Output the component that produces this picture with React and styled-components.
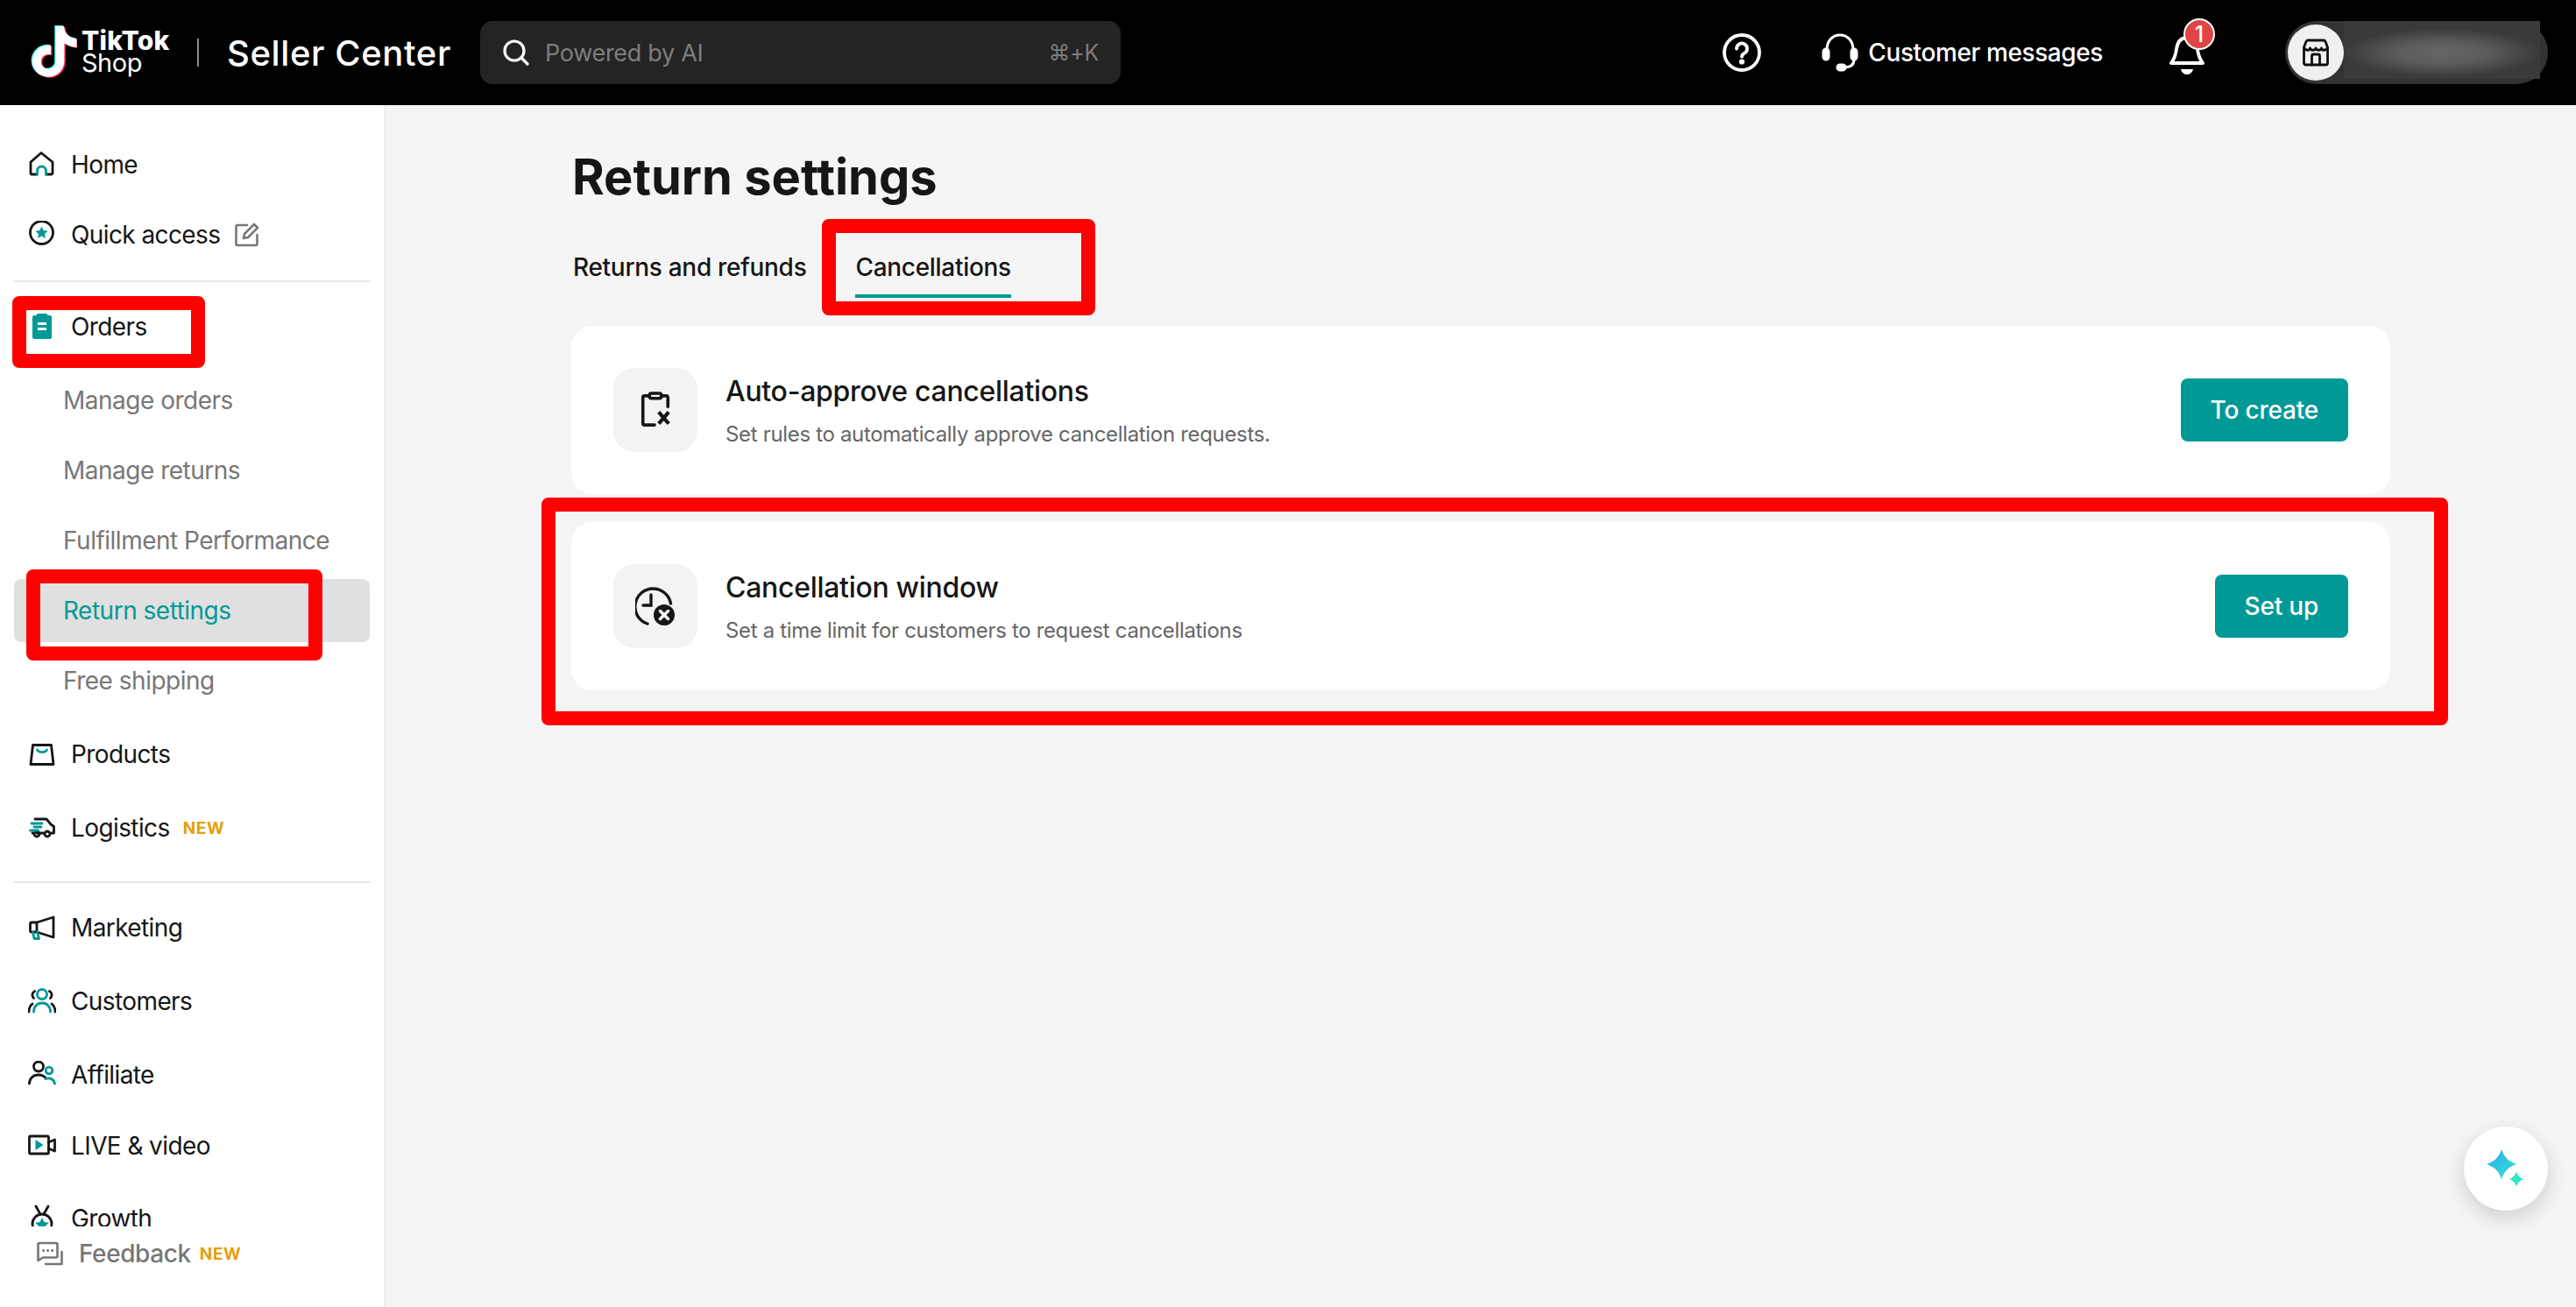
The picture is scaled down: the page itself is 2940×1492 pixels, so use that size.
import React from "react";
import styled, { createGlobalStyle } from "styled-components";

const TEAL = "#009995";
const INK = "#161616";

const GlobalStyle = createGlobalStyle`
  html, body {
    margin: 0;
    padding: 0;
    background: #f5f5f5;
    font-family: Inter, "Noto Sans", sans-serif;
    color: ${INK};
  }
  * { box-sizing: border-box; }
`;

const Page = styled.div`
  position: relative;
  width: 2940px;
  height: 1492px;
  overflow: hidden;
  display: flex;
  flex-direction: column;
`;

const Header = styled.header`
  height: 120px;
  flex: none;
  background: #000;
  display: flex;
  align-items: center;
  color: #fff;
  padding: 0 32px 0 32px;
`;

const LogoMark = styled.svg`
  width: 56px;
  height: 64px;
  flex: none;
`;

const LogoWords = styled.div`
  width: 137px;
  padding-left: 5px;
  display: flex;
  flex-direction: column;
  line-height: 26px;
  padding-bottom: 2px;
  b {
    font-size: 30px;
    font-weight: 800;
    letter-spacing: 0.2px;
  }
  span {
    font-size: 29px;
    letter-spacing: -0.5px;
  }
`;

const LogoDivider = styled.div`
  width: 2px;
  height: 32px;
  background: #8a8a8a;
  margin-right: 32px;
`;

const AppName = styled.div`
  font-size: 40px;
  font-weight: 500;
  width: 289px;
  letter-spacing: 0.6px;
`;

const Search = styled.div`
  width: 731px;
  height: 72px;
  border-radius: 14px;
  background: #242424;
  display: flex;
  align-items: center;
  padding: 0 25px;
  gap: 17px;
  font-size: 27px;
  letter-spacing: -0.3px;
  color: #7d7d7d;
  span:last-child {
    margin-left: auto;
    font-size: 25px;
  }
`;

const HeaderRight = styled.div`
  margin-left: auto;
  display: flex;
  align-items: center;
`;

const HeaderIcon = styled.svg`
  flex: none;
`;

const Messages = styled.div`
  display: flex;
  align-items: center;
  gap: 10px;
  font-size: 28px;
  font-weight: 500;
  letter-spacing: -0.4px;
  margin-left: 68px;
`;

const BellWrap = styled.div`
  position: relative;
  width: 44px;
  height: 44px;
  margin: 6px 0 0 76px;
`;

const BellBadge = styled.div`
  position: absolute;
  top: -20px;
  left: 16px;
  width: 36px;
  height: 36px;
  border-radius: 50%;
  background: #e04444;
  border: 2px solid #fff;
  font-size: 25px;
  font-weight: 500;
  display: flex;
  align-items: center;
  justify-content: center;
`;

const Account = styled.div`
  width: 300px;
  height: 72px;
  margin-left: 88px;
  border-radius: 36px;
  background: #333;
  display: flex;
  align-items: center;
  padding-left: 3px;
`;

const Avatar = styled.div`
  width: 64px;
  height: 64px;
  border-radius: 50%;
  flex: none;
  background: #f0f0f0;
  display: flex;
  align-items: center;
  justify-content: center;
`;

const BlurredName = styled.div`
  width: 224px;
  height: 66px;
  align-self: flex-start;
  background: radial-gradient(ellipse 50% 42% at 50% 55%, #666 0%, #5c5c5c 45%, #3a3a3a 100%);
`;

const Body = styled.div`
  flex: 1;
  display: flex;
  min-height: 0;
`;

const Sidebar = styled.aside`
  width: 440px;
  flex: none;
  background: #fff;
  border-right: 2px solid #eee;
  display: flex;
  flex-direction: column;
`;

const NavScroll = styled.nav`
  height: 1280px;
  flex: none;
  overflow: hidden;
  padding: 32px 16px 0;
`;

const NavItem = styled.div`
  height: 72px;
  margin-top: ${(p) => p.$top || 0}px;
  padding-left: 16px;
  display: flex;
  align-items: center;
  gap: 17px;
  font-size: 28px;
  letter-spacing: -0.6px;
`;

const SubItem = styled.div`
  height: 72px;
  margin-top: ${(p) => p.$top ?? 8}px;
  padding-left: 56px;
  display: flex;
  align-items: center;
  border-radius: 8px;
  font-size: 28px;
  letter-spacing: -0.5px;
  color: ${(p) => (p.$active ? TEAL : "#777")};
  background: ${(p) => (p.$active ? "#e0e0e0" : "transparent")};
`;

const NavIcon = styled.svg`
  width: 32px;
  height: 32px;
  flex: none;
`;

const NavDivider = styled.div`
  height: 2px;
  background: #e6e6e6;
  margin-top: ${(p) => p.$top}px;
`;

const NewTag = styled.span`
  color: #e2a00e;
  font-size: 19px;
  font-weight: 700;
  letter-spacing: 0.6px;
  margin-left: ${(p) => p.$left}px;
`;

const SideFooter = styled.div`
  padding: 14px 0 0 42px;
  display: flex;
  align-items: center;
  gap: 18px;
  font-size: 28px;
  font-weight: 500;
  letter-spacing: -0.4px;
  color: #777;
`;

const Main = styled.main`
  flex: 1;
  padding: 0 212px;
`;

const Title = styled.h1`
  margin: 46px 0 0;
  font-size: 56px;
  line-height: 72px;
  font-weight: 700;
  padding-left: 1px;
`;

const Tabs = styled.div`
  display: flex;
  margin-top: 48px;
  padding-left: 2px;
  gap: 56px;
  margin-bottom: 32px;
`;

const Tab = styled.div`
  font-size: 28px;
  font-weight: 500;
  line-height: 38px;
  height: 54px;
  letter-spacing: -0.3px;
  border-bottom: 4px solid ${(p) => (p.$active ? TEAL : "transparent")};
`;

const Card = styled.section`
  height: 192px;
  background: #fff;
  border-radius: 24px;
  padding: 0 48px;
  margin-bottom: 32px;
  display: flex;
  align-items: center;
  gap: 32px;
`;

const CardIcon = styled.div`
  width: 96px;
  height: 96px;
  flex: none;
  border-radius: 24px;
  background: #f3f3f3;
  display: flex;
  align-items: center;
  justify-content: center;
`;

const CardText = styled.div`
  flex: 1;
  min-width: 0;
`;

const CardTitle = styled.div`
  font-size: 32px;
  font-weight: 500;
  line-height: 44px;
  letter-spacing: -0.3px;
`;

const CardDesc = styled.div`
  font-size: 24px;
  line-height: 32px;
  margin-top: 11px;
  letter-spacing: -0.33px;
  color: #666;
`;

const Button = styled.button`
  height: 72px;
  padding: 0 34px;
  flex: none;
  border: 0;
  border-radius: 8px;
  background: ${TEAL};
  color: #fff;
  font-family: inherit;
  font-size: 28px;
  font-weight: 500;
  letter-spacing: -0.2px;
`;

const Mark = styled.div`
  position: absolute;
  left: ${(p) => p.$x}px;
  top: ${(p) => p.$y}px;
  width: ${(p) => p.$w}px;
  height: ${(p) => p.$h}px;
  border: 16px solid #f00;
  border-radius: 8px;
  pointer-events: none;
`;

const AiButton = styled.div`
  position: absolute;
  right: 32px;
  bottom: 110px;
  width: 96px;
  height: 96px;
  border-radius: 50%;
  background: #fff;
  box-shadow: 0 8px 24px rgba(0, 0, 0, 0.16);
  display: flex;
  align-items: center;
  justify-content: center;
`;

const TIKTOK_PATH =
  "M12.525.02c1.31-.02 2.61-.01 3.91-.02.08 1.53.63 3.09 1.75 4.17 1.12 1.11 2.7 1.62 4.24 1.79v4.03c-1.44-.05-2.89-.35-4.2-.97-.57-.26-1.1-.59-1.62-.93-.01 2.92.01 5.84-.02 8.75-.08 1.4-.54 2.79-1.35 3.94-1.31 1.92-3.58 3.17-5.91 3.21-1.43.08-2.86-.31-4.08-1.03-2.02-1.19-3.44-3.37-3.65-5.71-.02-.5-.03-1-.01-1.49.18-1.9 1.12-3.72 2.58-4.96 1.66-1.44 3.98-2.13 6.15-1.72.02 1.48-.04 2.96-.04 4.44-.99-.32-2.15-.23-3.02.37-.63.41-1.11 1.04-1.36 1.75-.21.51-.15 1.07-.14 1.61.24 1.64 1.82 3.02 3.5 2.87 1.12-.01 2.19-.66 2.77-1.61.19-.33.4-.67.41-1.06.1-1.79.06-3.57.07-5.36.01-4.03-.01-8.05.02-12.07z";

const TikTokLogo = () => (
  <LogoMark viewBox="0.6 -.2 23 26.400" preserveAspectRatio="none">
    <path d={TIKTOK_PATH} fill="#25f4ee" transform="translate(.5 .2)" />
    <path d={TIKTOK_PATH} fill="#fe2c55" transform="translate(1.6 .9)" />
    <path d={TIKTOK_PATH} fill="#fff" transform="translate(1 .5)" />
  </LogoMark>
);

const line = { fill: "none", stroke: INK, strokeWidth: 2.8, strokeLinecap: "round", strokeLinejoin: "round" };
const teal = { ...line, stroke: TEAL };

const HomeIcon = () => (
  <NavIcon viewBox="0 0 32 32">
    <path d="M10 27H4.500a1.500 1.500 0 0 1-1.500-1.500V13L15 2.500 28 13v12.500a1.500 1.500 0 0 1-1.500 1.500H22" {...line} />
    <path d="M10.500 27.500V23a5 5 0 0 1 10 0v4.500" {...teal} />
  </NavIcon>
);

const QuickIcon = () => (
  <NavIcon viewBox="0 0 32 32">
    <circle cx="15.500" cy="13.500" r="13" {...line} />
    <path d="M15.500 6.500l2.200 4.600 5 .6-3.700 3.400 1 5-4.500-2.500-4.500 2.500 1-5-3.700-3.400 5-.6z" fill={TEAL} />
  </NavIcon>
);

const EditIcon = () => (
  <svg width="28" height="28" viewBox="0 0 28 28" fill="none" stroke="#777" strokeWidth="2.600" strokeLinecap="round" strokeLinejoin="round">
    <path d="M14 3H3a1.500 1.500 0 0 0-1.500 1.500v20A1.500 1.500 0 0 0 3 26h21a1.500 1.500 0 0 0 1.500-1.500V14" />
    <path d="M22 2l4 4-11 11-5 1 1-5z" />
  </svg>
);

const OrdersIcon = () => (
  <NavIcon viewBox="0 0 32 32">
    <path d="M11 1h10a1 1 0 0 1 1 1v1h3a2 2 0 0 1 2 2v23a2 2 0 0 1-2 2H7a2 2 0 0 1-2-2V5a2 2 0 0 1 2-2h3V2a1 1 0 0 1 1-1z" fill={TEAL} />
    <path d="M11 12.500h10M11 18.500h10" stroke="#fff" strokeWidth="3" />
  </NavIcon>
);

const ProductsIcon = () => (
  <NavIcon viewBox="0 0 32 32">
    <path d="M5.500 5.500h21l2.500 22H3z" {...line} />
    <path d="M10.500 11c1.500 3.500 9.500 3.500 11 0" {...teal} />
  </NavIcon>
);

const TruckIcon = () => (
  <NavIcon viewBox="0 0 32 32">
    <path d="M8 6h13l5 6 3.500 2.500V22h-3M10 22h8M5 22h1.500" {...line} />
    <circle cx="10" cy="23" r="3" {...line} />
    <circle cx="22" cy="23" r="3" {...line} />
    <path d="M4 11h12M7 15h8M2.500 19h9" {...teal} />
  </NavIcon>
);

const MegaphoneIcon = () => (
  <NavIcon viewBox="0 0 32 32">
    <path d="M10 10v11H4a1.500 1.500 0 0 1-1.500-1.500v-8A1.500 1.500 0 0 1 4 10zM10 10l19-6v23l-19-6" {...line} />
    <path d="M5.500 21l1.500 7.500h5.500L10.500 21" {...teal} />
  </NavIcon>
);

const CustomersIcon = () => (
  <NavIcon viewBox="0 0 32 32">
    <circle cx="16" cy="8" r="5.500" {...teal} />
    <path d="M6.500 28c0-6 4-10 9.500-10s9.500 4 9.500 10" {...teal} />
    <path d="M7.500 4.500C4.500 6 4 10 6.500 12.500M24.500 4.500c3 1.500 3.500 5.500 1 8M1 28c0-4 1-7 4-9M31 28c0-4-1-7-4-9" {...line} />
  </NavIcon>
);

const AffiliateIcon = () => (
  <NavIcon viewBox="0 0 32 32">
    <circle cx="12" cy="6.500" r="5.500" {...line} />
    <path d="M1.500 26c0-6 4.500-10 10.500-10 3.500 0 6.500 1.500 8.500 4" {...line} />
    <circle cx="24" cy="11" r="3.800" {...teal} />
    <path d="M20 20.500c4.500-1.500 9.500 0 10.500 5.500" {...teal} />
  </NavIcon>
);

const LiveIcon = () => (
  <NavIcon viewBox="0 0 32 32">
    <rect x="1.500" y="5" width="22" height="20" rx="1.500" {...line} />
    <path d="M23.500 12l7-3v13l-7-3" {...line} />
    <path d="M8.500 9l9 6-9 6z" fill={TEAL} />
  </NavIcon>
);

const GrowthIcon = () => (
  <NavIcon viewBox="0 0 32 32">
    <circle cx="16" cy="22" r="11" {...line} />
    <path d="M9 2l5 9M23 2l-5 9" {...line} />
    <path d="M16 15l2.500 5 5.500.8-4 3.700 1 5.500-5-2.700-5 2.700 1-5.500-4-3.700 5.500-.8z" fill={TEAL} />
  </NavIcon>
);

const FeedbackIcon = () => (
  <svg width="30" height="28" viewBox="0 0 30 28" fill="none" stroke="#777" strokeWidth="2.600" strokeLinecap="round" strokeLinejoin="round">
    <path d="M3 2h19a1.500 1.500 0 0 1 1.500 1.500V17a1.500 1.500 0 0 1-1.500 1.500H7L1.500 22V3.500A1.500 1.500 0 0 1 3 2z" />
    <path d="M28.500 12v14H10" />
    <path d="M7.500 10.500h.1M12.500 10.500h.1M17.500 10.500h.1" strokeWidth="3" />
  </svg>
);

const ClipboardX = () => (
  <svg width="38" height="42" viewBox="0 0 40 44" fill="none" stroke={INK} strokeWidth="3.800" strokeLinejoin="round">
    <path d="M13 5H7a2 2 0 0 0-2 2v31a2 2 0 0 0 2 2h12M27 5h6a2 2 0 0 1 2 2v11" strokeLinecap="round" />
    <rect x="13" y="2" width="14" height="6" rx="2" />
    <path d="M24 24.500l12 14M36 24.500l-12 14" strokeWidth="4.400" />
  </svg>
);

const ClockX = () => (
  <svg width="46" height="46" viewBox="0 0 46 46" fill="none">
    <path d="M14 43A20.500 20.500 0 1 1 40.500 20" stroke={INK} strokeWidth="3.400" strokeLinecap="round" />
    <path d="M18 10v12H9" stroke={INK} strokeWidth="3.400" strokeLinecap="round" />
    <circle cx="33" cy="33" r="12" fill={INK} />
    <path d="M28.500 28.500l9 9M37.500 28.500l-9 9" stroke="#fff" strokeWidth="3.400" strokeLinecap="round" />
  </svg>
);

const StoreIcon = () => (
  <svg width="30" height="32" viewBox="0 0 30 32" fill="none" stroke="#111" strokeWidth="2.800" strokeLinejoin="round" strokeLinecap="round">
    <path d="M6 2h18a2 2 0 0 1 2 1.500L28.500 10v18a2 2 0 0 1-2 2h-23a2 2 0 0 1-2-2V10L4 3.500A2 2 0 0 1 6 2z" />
    <path d="M2 11c2 3 6 3 6.500 0 1 3 6 3 6.500 0 1 3 6 3 6.500 0 .5 3 4.500 3 6.500 0" />
    <path d="M10.500 30V20a2 2 0 0 1 2-2h5a2 2 0 0 1 2 2v10" />
  </svg>
);

const App = () => (
  <Page>
    <GlobalStyle />
    <Header>
      <TikTokLogo />
      <LogoWords>
        <b>TikTok</b>
        <span>Shop</span>
      </LogoWords>
      <LogoDivider />
      <AppName>Seller Center</AppName>
      <Search>
        <svg width="32" height="32" viewBox="0 0 32 32" fill="none" stroke="#fff" strokeWidth="3.200" strokeLinecap="round">
          <circle cx="14" cy="14" r="11" />
          <path d="M22 22l7 7" />
        </svg>
        <span>Powered by AI</span>
        <span>⌘+K</span>
      </Search>
      <HeaderRight>
        <HeaderIcon width="44" height="44" viewBox="0 0 44 44" fill="none" stroke="#fff" strokeWidth="3.800" strokeLinecap="round">
          <circle cx="22" cy="22" r="20" />
          <path d="M16 17.500a6 6 0 1 1 9 5.200c-2 1.200-3 2-3 4" />
          <circle cx="22" cy="32.500" r="1.200" fill="#fff" />
        </HeaderIcon>
        <Messages>
          <HeaderIcon width="44" height="44" viewBox="0 0 44 44" fill="none" stroke="#fff" strokeWidth="3" strokeLinecap="round">
            <path d="M7 19C7 9 13 2 22 2s15 7 15 17" />
            <rect x="3" y="18" width="6" height="12" rx="3" fill="#fff" />
            <rect x="35" y="18" width="6" height="12" rx="3" fill="#fff" />
            <path d="M38 30c0 6-4 9-12 9" />
            <rect x="19" y="36" width="9" height="6" rx="3" fill="#fff" />
          </HeaderIcon>
          Customer messages
        </Messages>
        <BellWrap>
          <HeaderIcon width="44" height="44" viewBox="0 0 44 44" fill="none" stroke="#fff" strokeWidth="3.800" strokeLinejoin="round">
            <path d="M20 2C12 2 9 8 8 15c-1 8-3 12-6 16h36c-3-4-5-8-6-16C31 8 28 2 20 2z" />
            <path d="M13 38h14c-1 4-4 6-7 6s-6-2-7-6z" fill="#fff" stroke="none" />
          </HeaderIcon>
          <BellBadge>1</BellBadge>
        </BellWrap>
        <Account>
          <Avatar>
            <StoreIcon />
          </Avatar>
          <BlurredName />
        </Account>
      </HeaderRight>
    </Header>
    <Body>
      <Sidebar>
        <NavScroll>
          <NavItem>
            <HomeIcon />
            Home
          </NavItem>
          <NavItem $top={8}>
            <QuickIcon />
            Quick access
            <EditIcon />
          </NavItem>
          <NavDivider $top={16} />
          <NavItem $top={15}>
            <OrdersIcon />
            Orders
          </NavItem>
          <SubItem $top={12}>Manage orders</SubItem>
          <SubItem>Manage returns</SubItem>
          <SubItem>Fulfillment Performance</SubItem>
          <SubItem $active>Return settings</SubItem>
          <SubItem>Free shipping</SubItem>
          <NavItem $top={12}>
            <ProductsIcon />
            Products
          </NavItem>
          <NavItem $top={12}>
            <TruckIcon />
            Logistics
            <NewTag $left={-2}>NEW</NewTag>
          </NavItem>
          <NavDivider $top={25} />
          <NavItem $top={15}>
            <MegaphoneIcon />
            Marketing
          </NavItem>
          <NavItem $top={12}>
            <CustomersIcon />
            Customers
          </NavItem>
          <NavItem $top={12}>
            <AffiliateIcon />
            Affiliate
          </NavItem>
          <NavItem $top={9}>
            <LiveIcon />
            LIVE &amp; video
          </NavItem>
          <NavItem $top={11}>
            <GrowthIcon />
            Growth
          </NavItem>
        </NavScroll>
        <SideFooter>
          <FeedbackIcon />
          Feedback
          <NewTag $left={-8}>NEW</NewTag>
        </SideFooter>
      </Sidebar>
      <Main>
        <Title>Return settings</Title>
        <Tabs>
          <Tab>Returns and refunds</Tab>
          <Tab $active>Cancellations</Tab>
        </Tabs>
        <Card>
          <CardIcon>
            <ClipboardX />
          </CardIcon>
          <CardText>
            <CardTitle>Auto-approve cancellations</CardTitle>
            <CardDesc>Set rules to automatically approve cancellation requests.</CardDesc>
          </CardText>
          <Button>To create</Button>
        </Card>
        <Card>
          <CardIcon>
            <ClockX />
          </CardIcon>
          <CardText>
            <CardTitle>Cancellation window</CardTitle>
            <CardDesc>Set a time limit for customers to request cancellations</CardDesc>
          </CardText>
          <Button>Set up</Button>
        </Card>
      </Main>
    </Body>
    <Mark $x={14} $y={338} $w={220} $h={82} />
    <Mark $x={30} $y={650} $w={338} $h={104} />
    <Mark $x={938} $y={250} $w={312} $h={110} />
    <Mark $x={618} $y={568} $w={2176} $h={260} />
    <AiButton>
      <svg width="44" height="44" viewBox="0 0 44 44">
        <defs>
          <linearGradient id="spark" x1="0" y1="0" x2="1" y2="1">
            <stop offset="0" stopColor="#2fa8ee" />
            <stop offset="1" stopColor="#2fe6d4" />
          </linearGradient>
        </defs>
        <path d="M17 0C20 9 25 14 34 17 25 20 20 25 17 34 14 25 9 20 0 17 9 14 14 9 17 0z" fill="url(#spark)" />
        <path d="M34 25.500C35.500 30 38 32.500 42.500 34 38 35.500 35.500 38 34 42.500 32.500 38 30 35.500 25.500 34 30 32.500 32.500 30 34 25.500z" fill="#2fe6c8" />
      </svg>
    </AiButton>
  </Page>
);

export default App;
